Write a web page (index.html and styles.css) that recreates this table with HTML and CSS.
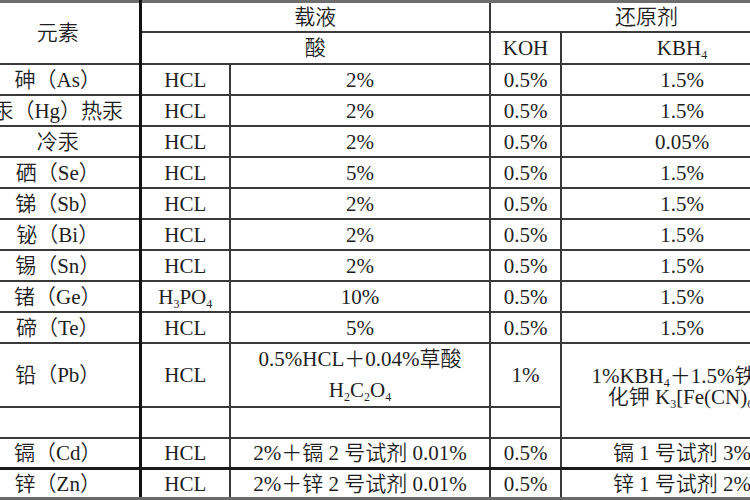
FILE: index.html
```html
<!DOCTYPE html>
<html lang="zh-CN">
<head>
<meta charset="utf-8">
<title>氢化物发生条件表</title>
<link rel="stylesheet" href="styles.css">
</head>
<body>
<div class="sheet">
<table class="tbl">
  <colgroup>
    <col class="c1"><col class="c2"><col class="c3"><col class="c4"><col class="c5">
  </colgroup>
  <tr class="h1">
    <td rowspan="2" class="elem">元素</td>
    <td colspan="2" class="bl">载液</td>
    <td colspan="2">还原剂</td>
  </tr>
  <tr class="h2">
    <td colspan="2" class="bl">酸</td>
    <td>KOH</td>
    <td>KBH<span class="s">4</span></td>
  </tr>
  <tr><td>砷（As）</td><td class="bl">HCL</td><td>2%</td><td>0.5%</td><td>1.5%</td></tr>
  <tr><td>汞（Hg）热汞</td><td class="bl">HCL</td><td>2%</td><td>0.5%</td><td>1.5%</td></tr>
  <tr><td>冷汞</td><td class="bl">HCL</td><td>2%</td><td>0.5%</td><td>0.05%</td></tr>
  <tr><td>硒（Se）</td><td class="bl">HCL</td><td>5%</td><td>0.5%</td><td>1.5%</td></tr>
  <tr><td>锑（Sb）</td><td class="bl">HCL</td><td>2%</td><td>0.5%</td><td>1.5%</td></tr>
  <tr><td>铋（Bi）</td><td class="bl">HCL</td><td>2%</td><td>0.5%</td><td>1.5%</td></tr>
  <tr><td>锡（Sn）</td><td class="bl">HCL</td><td>2%</td><td>0.5%</td><td>1.5%</td></tr>
  <tr><td>锗（Ge）</td><td class="bl">H<span class="s">3</span>PO<span class="s">4</span></td><td>10%</td><td>0.5%</td><td>1.5%</td></tr>
  <tr><td>碲（Te）</td><td class="bl">HCL</td><td>5%</td><td>0.5%</td><td>1.5%</td></tr>
  <tr class="tall">
    <td>铅（Pb）</td>
    <td class="bl">HCL</td>
    <td class="two">0.5%HCL＋0.04%草酸<br>H<span class="s">2</span>C<span class="s">2</span>O<span class="s">4</span></td>
    <td>1%</td>
    <td rowspan="2" class="wrap">1%KBH<span class="s">4</span>＋1.5%铁氰<br>化钾 K<span class="s">3</span>[Fe(CN)<span class="s">6</span>]</td>
  </tr>
  <tr><td></td><td class="bl"></td><td></td><td></td></tr>
  <tr class="cd"><td>镉（Cd）</td><td class="bl">HCL</td><td>2%＋镉 2 号试剂 0.01%</td><td>0.5%</td><td>镉 1 号试剂 3%</td></tr>
  <tr class="last"><td>锌（Zn）</td><td class="bl">HCL</td><td>2%＋锌 2 号试剂 0.01%</td><td>0.5%</td><td>锌 1 号试剂 2%</td></tr>
</table>
</div>
</body>
</html>
```

FILE: styles.css
```css
html, body {
  margin: 0;
  padding: 0;
  overflow: hidden;
  background: #ffffff;
}

body {
  font-family: "Liberation Serif", "Noto Sans CJK SC", serif;
  font-weight: 350;
  color: #1e1e1e;
}

.sheet {
  width: 750px;
  height: 500px;
  overflow: hidden;
  background: #8a8a8a;
}

.tbl {
  border-collapse: collapse;
  table-layout: fixed;
  width: 827px;
  margin-left: -25px;
  background: #ffffff;
  border-top: 3px solid #6e6e6e;
}

.c1 { width: 164px; }
.c2 { width: 90px; }
.c3 { width: 260px; }
.c4 { width: 71px; }
.c5 { width: 242px; }

.tbl td {
  border: 2px solid #3a3a3a;
  padding: 0;
  height: 29px;
  font-size: 21px;
  line-height: 24px;
  text-align: center;
  vertical-align: middle;
  white-space: nowrap;
  overflow: hidden;
}

.tbl td.bl {
  border-left: 3px solid #111111;
}

.tbl .h1 td {
  height: 28px;
}

.tbl .h2 td {
  height: 30px;
}

.tbl .tall td {
  height: 57px;
}

.tbl td.two {
  line-height: 31px;
}

.tbl td.wrap {
  line-height: 21px;
  padding-bottom: 8px;
  padding-left: 4px;
}

.tbl .cd td {
  height: 28px;
  border-bottom: 3px solid #1a1a1a;
}

.tbl .last td {
  height: 27px;
  border-bottom: 4px solid #6a6a6a;
}

.s {
  font-size: 12px;
  line-height: 0;
  vertical-align: -4px;
}
```
